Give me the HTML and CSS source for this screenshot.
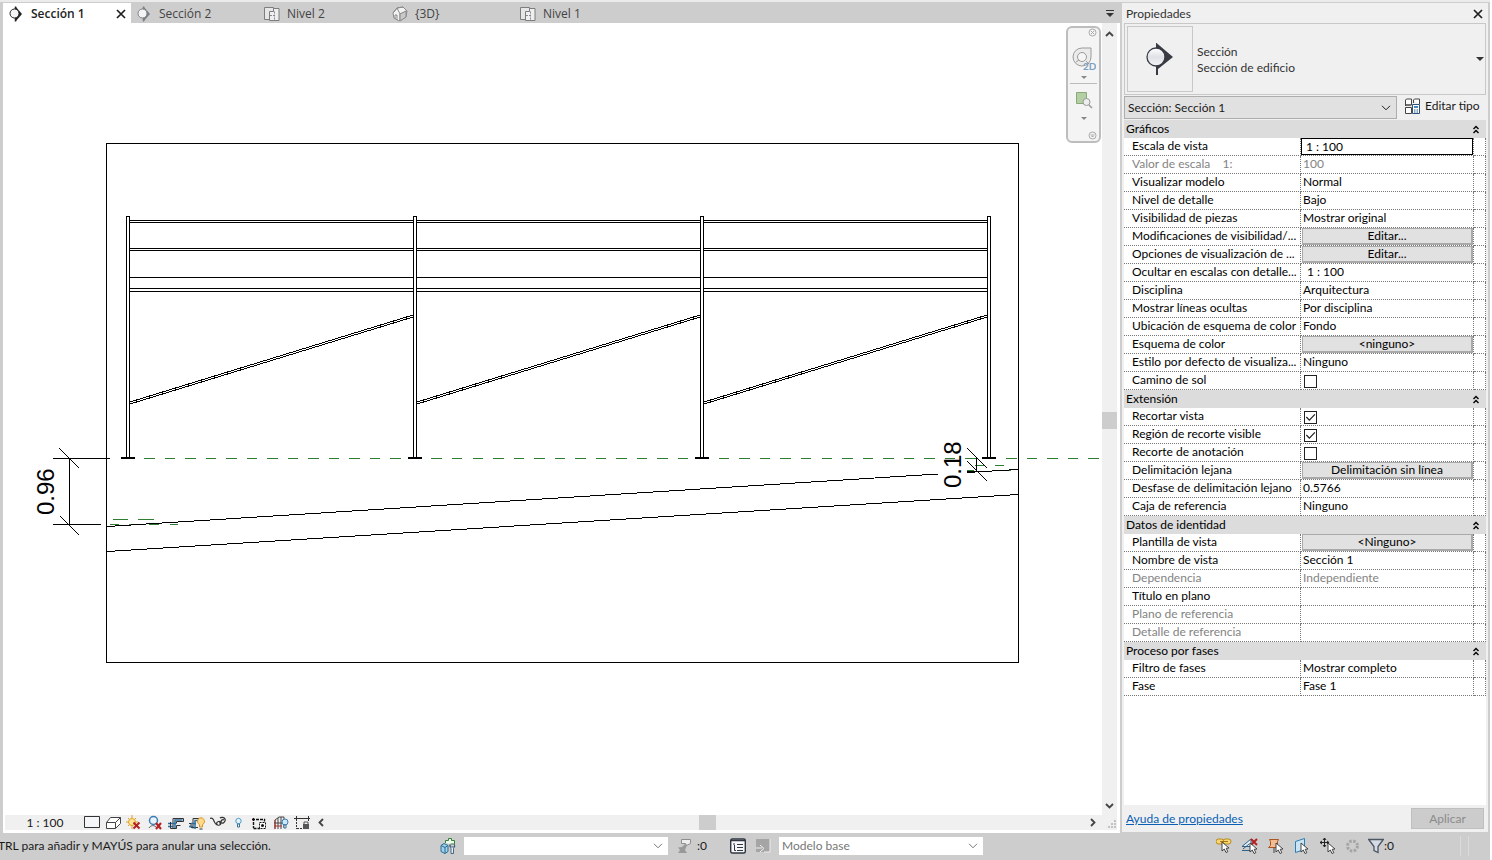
FILE: index.html
```html
<!DOCTYPE html>
<html lang="es">
<head>
<meta charset="utf-8">
<meta name="viewport" content="width=device-width, initial-scale=1">
<title>Sección 1</title>
<link rel="stylesheet" href="styles.css">
</head>
<body>
<svg class="defs" width="0" height="0" aria-hidden="true">
  <defs>
    <linearGradient id="ball" x1="0" y1="0" x2="0" y2="1"><stop offset="0" stop-color="#fff"/><stop offset=".5" stop-color="#dfe1e6"/><stop offset="1" stop-color="#f4f5f7"/></linearGradient>
    <symbol id="i-section" viewBox="0 0 16 16"><path d="M8 1l6 7-6 7z" fill="currentColor"/><circle cx="6.500" cy="7.500" r="4.500" fill="#f4f4f4" stroke="currentColor"/><path d="M7.500 12v3.500M7.500 .500V3" stroke="currentColor" stroke-width="1.500"/></symbol>
    <symbol id="i-plan" viewBox="0 0 16 16"><path d="M.500 1.500h9v12h-9z" fill="#e6e6e6" stroke="#7d7d7d"/><path d="M5.500 5.500h4v-3h5.500v12H5.500z" fill="#efefef" stroke="#7d7d7d"/><path d="M10.500 5.500V14M6 9.500h4" stroke="#8a8a8a" stroke-dasharray="2 1"/></symbol>
    <symbol id="i-house" viewBox="0 0 16 16"><path d="M1 7l4-5 6-1 4 4-1 6-7 4-5-3z" fill="#f2f2f2" stroke="#8a8a8a"/><path d="M1 7l4-5 3 6v7M8 8l7-3M5 2l6-1M3 13V9h2v5" fill="none" stroke="#8a8a8a"/><path d="M8 8l6-3v6l-6 4z" fill="#c9c9c9" stroke="#8a8a8a"/></symbol>
    <symbol id="i-chev" viewBox="0 0 10 6"><path d="M1 .800l4 4 4-4" fill="none" stroke="currentColor"/></symbol>
    <symbol id="i-tri" viewBox="0 0 8 4"><path d="M0 0h8L4 4z" fill="currentColor"/></symbol>
    <symbol id="i-collapse" viewBox="0 0 8 9"><path d="M1.500 4L4 1.500 6.500 4M1.500 8L4 5.500 6.500 8" fill="none" stroke="#000" stroke-width="1.400"/></symbol>
    <symbol id="i-x" viewBox="0 0 10 10"><path d="M1 1l8 8M9 1L1 9" stroke="#1e1e1e" stroke-width="1.700"/></symbol>
    <symbol id="i-arrow" viewBox="0 0 9 12"><path d="M1 1v9l2.300-2 1.700 3.500 1.800-.800L5.200 7.300 8 7z" fill="#fff" stroke="#333" stroke-width=".900"/></symbol>
    <symbol id="i-redx" viewBox="0 0 8 8"><path d="M1 1l6 6M7 1L1 7" stroke="#b32020" stroke-width="2"/></symbol>
  </defs>
</svg>

<div class="app">
  <div class="workspace">
    <main class="view">
      <nav class="tabs" aria-label="Vistas abiertas">
        <a class="tab tab-active" href="#seccion-1"><svg class="icon" viewBox="0 0 16 16"><use href="#i-section"/></svg><span class="tab-name">Sección 1</span></a>
        <a class="tab tab-dim" href="#seccion-2"><svg class="icon" viewBox="0 0 16 16"><use href="#i-section"/></svg><span class="tab-name">Sección 2</span></a>
        <a class="tab" href="#nivel-2"><svg class="icon" viewBox="0 0 16 16"><use href="#i-plan"/></svg><span class="tab-name">Nivel 2</span></a>
        <a class="tab" href="#3d"><svg class="icon" viewBox="0 0 16 16"><use href="#i-house"/></svg><span class="tab-name">{3D}</span></a>
        <a class="tab" href="#nivel-1"><svg class="icon" viewBox="0 0 16 16"><use href="#i-plan"/></svg><span class="tab-name">Nivel 1</span></a>
        <button class="plain tab-list" aria-label="Lista de vistas"><svg width="8" height="7" viewBox="0 0 8 7"><path d="M0 0h8v1H0zM0 3h8L4 7z" fill="#333"/></svg></button>
        <button class="plain tab-close" aria-label="Cerrar Sección 1"><svg width="10" height="10"><use href="#i-x"/></svg></button>
      </nav>

      <div class="canvas-row">
        <div class="canvas" id="seccion-1">
          <svg class="drawing" viewBox="5 23 1097 792" role="img" aria-label="Vista de sección">
            <defs>
              <g id="bay">
                <path d="M129 220.500h286M129 222.500h286M129 248.500h286M129 250.500h286M130 277.500h284M130 288.500h284M130 291.500h284"/>
                <path d="M130 402l283-87M130 404l283-87"/>
              </g>
              <g id="post"><path d="M126.500 458V216.500h3V458" fill="#fff"/><path d="M121 458h14" stroke-width="2"/></g>
            </defs>
            <g class="level">
              <path d="M123.500 458.500H1099" stroke-dasharray="10.500 10.030"/>
              <path d="M113 519.500h15M138 519.500h16M110 524.500h9M129 524.500h10M149 524.500h10M170 524.500h8M975 465.500h9M995 465.500h9M967 470.500h7M1004 470.500h7"/>
            </g>
            <g class="model">
              <rect x="106.500" y="143.500" width="912" height="519"/>
              <use href="#bay"/><use href="#bay" x="287"/><use href="#bay" x="574"/>
              <use href="#post"/><use href="#post" x="287"/><use href="#post" x="574"/><use href="#post" x="861"/>
              <path d="M107 526.500L938 474M967 472.500l51-3M107 551.500l911-57"/>
              <path d="M53 458.500h57M53 524.500h48M69.500 458v67M59 448l20 20M60 516l19 19"/>
              <path d="M976.500 458v13M967 448l20 20M967 461l20 20M967 471.500h23"/>
            </g>
            <text class="dim" transform="translate(54 515) rotate(-90)">0.96</text>
            <text class="dim" transform="translate(961 488) rotate(-90)">0.18</text>
          </svg>
          <div class="navbar">
            <svg width="9" height="9" viewBox="0 0 9 9"><circle cx="4.500" cy="4.500" r="3.500" fill="none" stroke="#aaa"/><path d="M3 3l3 3M6 3L3 6" stroke="#aaa"/></svg>
            <button class="plain nav-tool" aria-label="Rueda de navegación 2D">
              <svg width="24" height="24" viewBox="0 0 24 24"><path d="M10 1h9v9a9 9 0 1 1-9-9z" fill="#ebebeb" stroke="#9b9b9b"/><circle cx="10" cy="10" r="4.500" fill="#f5f5f5" stroke="#9b9b9b"/><path d="M4 15l3-2M14 14l3 3" stroke="#9b9b9b"/><text class="nav-2d" x="11" y="23">2D</text></svg>
            </button>
            <svg class="nav-caret" width="6" height="3"><use href="#i-tri"/></svg>
            <hr class="nav-rule">
            <button class="plain nav-tool" aria-label="Zoom de región">
              <svg width="18" height="18" viewBox="0 0 18 18"><path d="M1.500 1.500h10v11h-10z" fill="#b5cfa5" stroke="#8aa97b"/><circle cx="11.500" cy="11" r="3.500" fill="#eee" stroke="#999"/><path d="M14 14l3 3" stroke="#999" stroke-width="1.500"/></svg>
            </button>
            <svg class="nav-caret nav-caret-low" width="6" height="3"><use href="#i-tri"/></svg>
            <svg class="nav-end" width="9" height="9" viewBox="0 0 9 9"><circle cx="4.500" cy="4.500" r="3.500" fill="none" stroke="#aaa"/><path d="M2.500 4h4M3.500 5.500h2" stroke="#aaa"/></svg>
          </div>
        </div>
        <div class="vscroll">
          <button class="plain" aria-label="Desplazar arriba"><svg width="9" height="6" viewBox="0 0 9 6"><path d="M1 5l3.500-3.500L8 5" class="arrow"/></svg></button>
          <span class="thumb-v"></span>
          <button class="plain" aria-label="Desplazar abajo"><svg width="9" height="6" viewBox="0 0 9 6"><path d="M1 1l3.500 3.500L8 1" class="arrow"/></svg></button>
        </div>
      </div>

      <div class="viewbar">
        <button class="plain scale">1 : 100</button>
        <div class="view-tools">
          <svg class="icon" viewBox="0 0 16 16"><path d="M.500 1.500h15v11H.500z" fill="#f4f6f9" stroke="#333"/></svg>
          <svg class="icon" viewBox="0 0 16 16"><path d="M1.500 7.500l4-5h10v6l-5 5h-9zM1.500 7.500h9v6M10.500 7.500l5-5" fill="#fff" stroke="#444"/></svg>
          <svg class="icon" viewBox="0 0 16 16"><path d="M6 0v14M0 7h12M2 3l8 8M10 3l-8 8" stroke="#e0a32a"/><circle cx="6" cy="7" r="3.500" fill="#ffe696" stroke="#e0a32a"/><path d="M7.500 7.500l6 6M13.500 7.500l-6 6" stroke="#b32020" stroke-width="2"/></svg>
          <svg class="icon" viewBox="0 0 16 16"><circle cx="6.500" cy="5.500" r="4" fill="#e8f2fa" stroke="#3b7db5" stroke-width="1.500"/><path d="M2 13c2-3 5-3 7-1" stroke="#555" fill="none"/><path d="M9 8l5 6M14 8l-5 6" stroke="#b32020" stroke-width="2"/></svg>
          <svg class="icon" viewBox="0 0 16 16"><path d="M5 13.500V3.500h10.500v3H8.500v2" fill="none" stroke="#333"/><path d="M7 14V5h7.500M0 8.500h8M0 11.500h5.500" fill="none" stroke="#2f6f9f" stroke-width="1.500"/><path d="M2.500 7v6.500h6v-3h4" fill="none" stroke="#333"/></svg>
          <svg class="icon" viewBox="0 0 16 16"><path d="M4 13.500V3.500h6M0 8.500h2v4h7" fill="none" stroke="#333"/><path d="M6 14V5.500h4M2 8.500h5M0 11.500h4" fill="none" stroke="#2f6f9f" stroke-width="1.500"/><path d="M10.500 9.500a3.500 3.500 0 1 1 3 0v2.500h-3z" fill="#ffd98a" stroke="#d99525"/><path d="M10.500 14h3" stroke="#333"/></svg>
          <svg class="icon" viewBox="0 0 16 16"><path d="M0 3.500c2-1 3 0 4 2.500s3 5 5.500 4 1-4-1-3.500-2.500 2-1 3.500M9 8c2 0 2-1 3 0s4-2 3-4-4-2-5-1M11 7c0-2 2-3 3-2" fill="none" stroke="#333" stroke-width="1.200"/></svg>
          <svg class="icon" viewBox="0 0 16 16"><circle cx="7.500" cy="6" r="2.700" fill="#e5f3fc" stroke="#4f9dcb"/><path d="M6.500 9h2v3h-2z" fill="#fff" stroke="#3b6f93"/></svg>
          <svg class="icon" viewBox="0 0 16 16"><path d="M1.500 3v10M0 4.500h12.500v2M1.500 13.500H8" fill="none" stroke="#111" stroke-width="1.400" stroke-dasharray="3 1"/><path d="M7.500 7.500h6v6h-6z" fill="#fff" stroke="#111" stroke-dasharray="2 1"/><circle cx="10.500" cy="10.500" r="1.500" fill="#111"/></svg>
          <svg class="icon" viewBox="0 0 16 16"><path d="M2 14V5l4-3h5v11M1 8h11M5 3v11M8 2v12" fill="none" stroke="#444"/><path d="M1 11h8M2 5v9" stroke="#a33"/><circle cx="12" cy="7" r="3" fill="#cfe6f5" stroke="#3b7db5"/><path d="M11 10h2v3h-2z" fill="#fff" stroke="#3b6f93"/></svg>
          <svg class="icon" viewBox="0 0 16 16"><path d="M0 3.500h16M2.500 1v5M14.500 1v5" stroke="#333"/><path d="M2.500 7v7M3 13.500h5" stroke="#333" stroke-dasharray="2 1"/><path d="M9 9h6v5H9z" fill="#555"/><path d="M10 9V7h4v2" fill="none" stroke="#555"/></svg>
        </div>
        <button class="plain" aria-label="Desplazar a la izquierda"><svg width="6" height="9" viewBox="0 0 6 9"><path d="M5 1L1.500 4.500 5 8" class="arrow"/></svg></button>
        <span class="thumb-h"></span>
        <button class="plain" aria-label="Desplazar a la derecha"><svg width="6" height="9" viewBox="0 0 6 9"><path d="M1 1l3.500 3.500L1 8" class="arrow"/></svg></button>
        <svg class="grip" width="10" height="10" viewBox="0 0 10 10"><path d="M7 0h2v2H7zM4 3h2v2H4zM7 3h2v2H7zM1 6h2v2H1zM4 6h2v2H4zM7 6h2v2H7z" fill="#c2c2c2"/></svg>
      </div>
    </main>

    <aside class="props">
      <header class="props-title"><h2 class="props-name">Propiedades</h2><button class="plain" aria-label="Cerrar"><svg width="10" height="10"><use href="#i-x"/></svg></button></header>
      <button class="type-selector">
        <span class="type-thumb"><svg width="28" height="34" viewBox="0 0 28 34"><path d="M10.500 1L27 15 12 27v6h-2V1z" fill="#383b44"/><circle cx="10" cy="15" r="9" fill="url(#ball)" stroke="#383b44" stroke-width="1.300"/></svg></span>
        <span class="type-text">Sección<br>Sección de edificio</span>
        <svg class="type-caret" width="8" height="4"><use href="#i-tri"/></svg>
      </button>
      <div class="instance">
        <div class="combo instance-combo"><select class="combo-field" aria-label="Elemento"><option>Sección: Sección 1</option></select><svg class="combo-arrow" width="10" height="6"><use href="#i-chev"/></svg></div>
        <button class="plain edit-type"><svg class="icon" viewBox="0 0 16 16"><path d="M1.500 2l1-1h5v6h-6zM9.500 2l1-1h5v5M9.500 2v3M1.500 9.500h6v6h-6zM1 8l1-1h5" fill="#fff" stroke="#444"/><path d="M8.500 6.500h7v9h-7z" fill="#fff" stroke="#2c557d"/><path d="M10 8h4v2h-4z" fill="#4a86bd"/><path d="M10 12h4M10 14h4" stroke="#2c557d" stroke-dasharray="1 .500"/></svg>Editar tipo</button>
      </div>
      <div class="sheet">
        <table class="grid">
          <colgroup><col class="col-name"><col><col class="col-assoc"></colgroup>
          <tbody>
            <tr class="group"><th colspan="2">Gráficos</th><td><svg width="8" height="9"><use href="#i-collapse"/></svg></td></tr>
            <tr><th><label for="escala">Escala de vista</label></th><td><input class="scale-input" id="escala" type="text" value="1 : 100"></td><td></td></tr>
            <tr class="off"><th>Valor de escala &nbsp;&nbsp; 1:</th><td>100</td><td></td></tr>
            <tr><th>Visualizar modelo</th><td>Normal</td><td></td></tr>
            <tr><th>Nivel de detalle</th><td>Bajo</td><td></td></tr>
            <tr><th>Visibilidad de piezas</th><td>Mostrar original</td><td></td></tr>
            <tr><th>Modificaciones de visibilidad/...</th><td><button class="cell-btn">Editar...</button></td><td></td></tr>
            <tr><th>Opciones de visualización de ...</th><td><button class="cell-btn">Editar...</button></td><td></td></tr>
            <tr><th>Ocultar en escalas con detalle...</th><td class="inset">1 : 100</td><td></td></tr>
            <tr><th>Disciplina</th><td>Arquitectura</td><td></td></tr>
            <tr><th>Mostrar líneas ocultas</th><td>Por disciplina</td><td></td></tr>
            <tr><th>Ubicación de esquema de color</th><td>Fondo</td><td></td></tr>
            <tr><th>Esquema de color</th><td><button class="cell-btn">&lt;ninguno&gt;</button></td><td></td></tr>
            <tr><th>Estilo por defecto de visualiza...</th><td>Ninguno</td><td></td></tr>
            <tr><th><label for="sol">Camino de sol</label></th><td><input class="check" id="sol" type="checkbox"></td><td></td></tr>
            <tr class="group"><th colspan="2">Extensión</th><td><svg width="8" height="9"><use href="#i-collapse"/></svg></td></tr>
            <tr><th><label for="recortar">Recortar vista</label></th><td><input class="check" id="recortar" type="checkbox" checked></td><td></td></tr>
            <tr><th><label for="region">Región de recorte visible</label></th><td><input class="check" id="region" type="checkbox" checked></td><td></td></tr>
            <tr><th><label for="anotacion">Recorte de anotación</label></th><td><input class="check" id="anotacion" type="checkbox"></td><td></td></tr>
            <tr><th>Delimitación lejana</th><td><button class="cell-btn">Delimitación sin línea</button></td><td></td></tr>
            <tr><th>Desfase de delimitación lejano</th><td>0.5766</td><td></td></tr>
            <tr><th>Caja de referencia</th><td>Ninguno</td><td></td></tr>
            <tr class="group"><th colspan="2">Datos de identidad</th><td><svg width="8" height="9"><use href="#i-collapse"/></svg></td></tr>
            <tr><th>Plantilla de vista</th><td><button class="cell-btn">&lt;Ninguno&gt;</button></td><td></td></tr>
            <tr><th>Nombre de vista</th><td>Sección 1</td><td></td></tr>
            <tr class="off"><th>Dependencia</th><td>Independiente</td><td></td></tr>
            <tr><th>Título en plano</th><td></td><td></td></tr>
            <tr class="off"><th>Plano de referencia</th><td></td><td></td></tr>
            <tr class="off"><th>Detalle de referencia</th><td></td><td></td></tr>
            <tr class="group"><th colspan="2">Proceso por fases</th><td><svg width="8" height="9"><use href="#i-collapse"/></svg></td></tr>
            <tr><th>Filtro de fases</th><td>Mostrar completo</td><td></td></tr>
            <tr><th>Fase</th><td>Fase 1</td><td></td></tr>
          </tbody>
        </table>
      </div>
      <footer class="props-foot"><a class="help" href="#ayuda">Ayuda de propiedades</a><button class="apply" disabled>Aplicar</button></footer>
    </aside>
  </div>

  <footer class="status">
    <p class="hint">TRL para añadir y MAYÚS para anular una selección.</p>
    <div class="status-mid">
      <svg class="icon" viewBox="0 0 16 16"><path d="M1 7.500l3-2 4 2v6l-3 2-4-2z" fill="#9fd0ec" stroke="#2b6d92"/><path d="M1 7.500l4 2 3-2M5 9.500v6" fill="none" stroke="#2b6d92"/><path d="M5.500 5V2.500h3v-2h3v2h3V6h-4" fill="#f1faee" stroke="#33803a"/><path d="M10 6.500c-1 3 1 3 1 4v5h2.500v-5c0-1 2-1 1-4v2.500h-4z" fill="#e6eef5" stroke="#38597a" stroke-width=".900"/></svg>
      <div class="combo"><select class="combo-field" aria-label="Subproyecto activo"><option></option></select><svg class="combo-arrow" width="10" height="6"><use href="#i-chev"/></svg></div>
      <span class="count count-wide"><svg class="icon" viewBox="0 0 16 16"><path d="M4.500 1.500h9v4l-4 2-1-2h-4z" fill="#eee" stroke="#8e8e8e"/><path d="M8 6L5 9 1 9.500 3 12l-2 3h9l-2-3 2-5z" fill="#999"/></svg>:0</span>
      <svg class="icon" viewBox="0 0 16 16"><rect x=".700" y="1" width="14.600" height="14" rx="1.500" fill="#f7f7f7" stroke="#303642" stroke-width="1.400"/><path d="M1 2.500h14" stroke="#303642" stroke-width="1.500"/><path d="M3 6h2M7 6.500h6M7 9.500h6M7 12.500h6M4.500 7v5.500H6" stroke="#303642" fill="none"/></svg>
      <svg class="icon" viewBox="0 0 16 16"><path d="M1 1h14v13H1z" fill="#a5a5a5"/><path d="M15 1v13H9M1 10h6M5 7l4 3.500L5 14" fill="none" stroke="#eee"/></svg>
      <div class="combo"><select class="combo-field" aria-label="Opción de diseño"><option>Modelo base</option></select><svg class="combo-arrow" width="10" height="6"><use href="#i-chev"/></svg></div>
    </div>
    <div class="status-tools">
      <svg class="icon" viewBox="0 0 16 16"><rect x="0" y="1" width="8" height="5" rx="2.500" fill="#f7d774" stroke="#b8881b"/><rect x="7" y="1" width="8" height="5" rx="2.500" fill="#f7d774" stroke="#b8881b"/><path d="M4 3.500h8" stroke="#a67712"/><use href="#i-arrow" x="5" y="3" width="9" height="12"/></svg>
      <svg class="icon" viewBox="0 0 16 16"><path d="M0 8.500L9 1v7.500zM0 12.500h9M1 11l6-5" fill="#e5f1f8" stroke="#2d6187"/><use href="#i-redx" x="8" y="0" width="8" height="8"/><use href="#i-arrow" x="7" y="4" width="9" height="12"/></svg>
      <svg class="icon" viewBox="0 0 16 16"><path d="M1.500 1.500h9l-1 2v4l2 2h-11l2-2v-4z" fill="#f3bd93" stroke="#ab5420"/><path d="M6 10v5" stroke="#444"/><use href="#i-arrow" x="7" y="4" width="9" height="12"/></svg>
      <svg class="icon" viewBox="0 0 16 16"><path d="M1.500 3.500l9-3v11l-9 3z" fill="#c8e4f5" stroke="#2c7fb2"/><use href="#i-arrow" x="6" y="4" width="9" height="12"/></svg>
      <svg class="icon" viewBox="0 0 16 16"><path d="M4.500 0v9M0 4.500h9M3 2l1.500-2L6 2M3 7l1.500 2L6 7M2 3L0 4.500 2 6M7 3l2 1.500L7 6" stroke="#222" fill="none"/><use href="#i-arrow" x="7" y="4" width="9" height="12"/></svg>
      <svg class="icon" viewBox="0 0 16 16"><circle cx="6.500" cy="8" r="5" fill="none" stroke="#a5a5a5" stroke-width="3" stroke-dasharray="2.500 1.430"/></svg>
      <span class="count"><svg class="icon" viewBox="0 0 16 16"><path d="M.700 1.500h14.600L10 8.500v6l-4-2v-4z" fill="#d5dce6" stroke="#4d5562" stroke-width="1.300"/></svg>:0</span>
      <span class="status-grip"></span>
    </div>
  </footer>
</div>
</body>
</html>
```
FILE: styles.css
```css
* { box-sizing: border-box; }

body {
  margin: 0;
  background: #fff;
  color: #1a1a1a;
  font: 12px/16px Lato, "Open Sans", sans-serif;
}

button, input, select { font: inherit; color: inherit; }
.defs { position: absolute; }
svg { display: block; flex: none; }
.icon { width: 16px; height: 16px; }

.plain {
  display: flex;
  align-items: center;
  justify-content: center;
  padding: 0;
  border: 0;
  background: none;
}

.arrow { fill: none; stroke: #444; stroke-width: 1.8; }

.app {
  display: flex;
  flex-direction: column;
  min-height: 100vh;
  padding-right: 2px;
}

.workspace {
  flex: 1;
  display: grid;
  grid-template-columns: minmax(0, 1fr) 370px;
  border-top: 2px solid #ebebeb;
}

.view {
  display: flex;
  flex-direction: column;
  min-width: 0;
  border-left: 3px solid #cdcdcd;
  border-top: 1px solid #cdcdcd;
}

/* Tabs */
.tabs {
  position: relative;
  display: flex;
  height: 20px;
  background: #cdcdcd;
}

.tab {
  display: flex;
  align-items: center;
  gap: 7px;
  flex: 0 1 128px;
  padding: 1px 5px 0;
  color: #444;
  font-family: "Open Sans", sans-serif;
  text-decoration: none;
  white-space: nowrap;
}

.tab-dim .icon { color: #7c7f85; }
.tab-active { background: #fff; color: #222; font-weight: 600; }
.tab-list { margin-left: auto; width: 20px; }
.tab-close { position: absolute; left: 113px; top: 6px; }

/* Drawing area */
.canvas-row { flex: 1; display: flex; min-height: 0; }
.canvas { position: relative; flex: 1; min-width: 0; padding-left: 2px; }
.drawing { width: 100%; height: 100%; }
.level { fill: none; stroke: #2f7d32; shape-rendering: crispEdges; }
.model { fill: none; stroke: #000; shape-rendering: crispEdges; }
.dim { font: 24px "Liberation Sans", Arial, sans-serif; fill: #000; }

.navbar {
  position: absolute;
  top: 3px;
  right: 1px;
  display: flex;
  flex-direction: column;
  align-items: center;
  width: 35px;
  height: 117px;
  padding: 0 2px 1px;
  border: 2px solid #bdbdbd;
  border-radius: 6px;
  background: #f4f4f4;
  color: #888;
}

.navbar > svg:first-child, .nav-end { align-self: flex-end; }
.nav-tool { margin-top: 10px; }
.nav-caret { margin-top: 5px; }
.nav-caret-low { margin-top: 8px; }
.nav-rule { width: 100%; margin: 4px 0 0; border: 0; border-top: 1px solid #bbb; }
.nav-rule + .nav-tool { margin-top: 7px; }
.nav-end { margin-top: auto; }
.nav-2d { font: bold 10px Lato, sans-serif; fill: #7c9fc2; }

.vscroll {
  display: flex;
  flex-direction: column;
  align-items: center;
  justify-content: space-between;
  width: 18px;
  padding: 8px 3px 6px 0;
  background: linear-gradient(90deg, #f0f0f0 15px, #fff 15px);
}

.thumb-v { width: 15px; height: 17px; background: #cdcdcd; }

/* View control bar */
.viewbar {
  display: flex;
  align-items: center;
  height: 15px;
  margin: 0 3px 3px 2px;
  background: #f0f0f0;
}

.scale { margin-left: 23px; width: 34px; white-space: nowrap; }
.view-tools { display: flex; gap: 5px; margin: 0 8px 0 22px; }
.thumb-h { width: 17px; height: 15px; margin: 0 auto; background: #cdcdcd; }
.grip { margin-left: 11px; align-self: flex-end; }

/* Properties */
.props {
  display: flex;
  flex-direction: column;
  min-width: 0;
  padding: 0 2px;
  border: solid #cdcdcd;
  border-width: 1px 2px 1px 2px;
  background: #f0f0f0;
}

.props-title {
  display: flex;
  align-items: center;
  justify-content: space-between;
  height: 20px;
  padding: 2px 3px 0 2px;
}

.props-name { margin: 0; font-size: 12px; font-weight: 400; color: #333; }

.type-selector {
  display: flex;
  align-items: center;
  gap: 4px;
  height: 72px;
  padding: 2px;
  border: 1px solid #c8c8c8;
  background: none;
  color: #333;
  text-align: left;
}

.type-thumb {
  display: flex;
  align-items: center;
  justify-content: center;
  width: 66px;
  height: 66px;
  border: 1px solid #c8c8c8;
}

.type-text { padding-top: 1px; }
.type-caret { margin-left: auto; margin-right: -1px; }

.instance { display: flex; gap: 7px; padding: 1px 0; }

.combo {
  display: grid;
  grid-template-columns: minmax(0, 1fr) 15px;
  align-items: center;
  width: 204px;
  height: 18px;
  background: #fff;
  color: #777;
}

.combo-field {
  grid-area: 1 / 1 / 2 / 3;
  width: 100%;
  height: 100%;
  padding: 0 3px;
  border: 0;
  background: none;
  appearance: none;
}

.combo-arrow { grid-area: 1 / 2 / 2 / 3; }

.instance-combo {
  flex: 1;
  height: 23px;
  border: 1px solid #adadad;
  background: #e1e1e1;
  color: #1a1a1a;
}

.edit-type { gap: 5px; width: 82px; height: 20px; justify-content: flex-start; white-space: nowrap; }

.sheet { flex: 1; background: #fff; }

.grid {
  width: 100%;
  border-spacing: 0;
  table-layout: fixed;
  color: #000;
}

.col-name { width: 177px; }
.col-assoc { width: 12px; }
.grid tr { height: 18px; }

.grid th, .grid td {
  height: 18px;
  padding: 0 0 1px 2px;
  border: dotted #777;
  border-width: 0 1px 1px 0;
  font-weight: 400;
  line-height: 16px;
  text-align: left;
  white-space: nowrap;
}

.grid th { padding-left: 8px; }
.grid td:last-child { padding: 0; }
.grid .inset { padding-left: 6px; }
.grid .off { color: #838383; }
.grid .group th, .grid .group td { border: 0; background: #dcdcdc; }
.grid .group th { padding-left: 2px; }
.group svg { margin-left: -2px; }

.scale-input {
  display: block;
  width: calc(100% + 2px);
  height: 17px;
  margin: 0 0 -1px -2px;
  padding: 0 4px;
  border: 1px solid #000;
}

.cell-btn {
  display: block;
  width: calc(100% + 1px);
  height: 17px;
  margin: 0 0 -1px -1px;
  padding: 0;
  border: solid #a9a9a9;
  border-width: 1px 2px 2px 1px;
  background: #e1e1e1;
  line-height: 14px;
}

.check {
  appearance: none;
  display: grid;
  width: 13px;
  height: 13px;
  margin: 3px 0 0 1px;
  border: 1px solid #222;
  background: #fff;
}

.check:checked::after {
  content: "";
  background: #222;
  clip-path: polygon(8% 50%, 16% 42%, 40% 66%, 86% 18%, 94% 26%, 40% 82%);
}

.props-foot {
  display: flex;
  align-items: center;
  justify-content: space-between;
  height: 27px;
  padding: 0 2px;
}

.help { color: #0a5fb4; }

.apply {
  width: 73px;
  height: 21px;
  padding: 0;
  border: 1px solid #bfbfbf;
  background: #cccccc;
  color: #8b8b8b;
}

/* Status bar */
.status {
  display: grid;
  grid-template-columns: minmax(0, 440px) auto minmax(0, 1fr);
  align-items: center;
  height: 27px;
  padding-bottom: 1px;
  background: #cdcdcd;
}

.hint { margin: 0 0 0 -2px; white-space: nowrap; overflow: hidden; }
.status-mid { display: flex; align-items: center; gap: 9px; }
.status-mid .combo { margin-left: -1px; }
.count { display: flex; align-items: center; }
.count-wide { gap: 4px; width: 44px; }
.status-tools { display: flex; align-items: center; justify-content: flex-end; gap: 10px; }
.status-tools .count { margin-left: -4px; }

.status-grip {
  width: 9px;
  height: 20px;
  margin: 0 21px 0 56px;
  border: solid #dadada;
  border-width: 0 1px;
}
```
